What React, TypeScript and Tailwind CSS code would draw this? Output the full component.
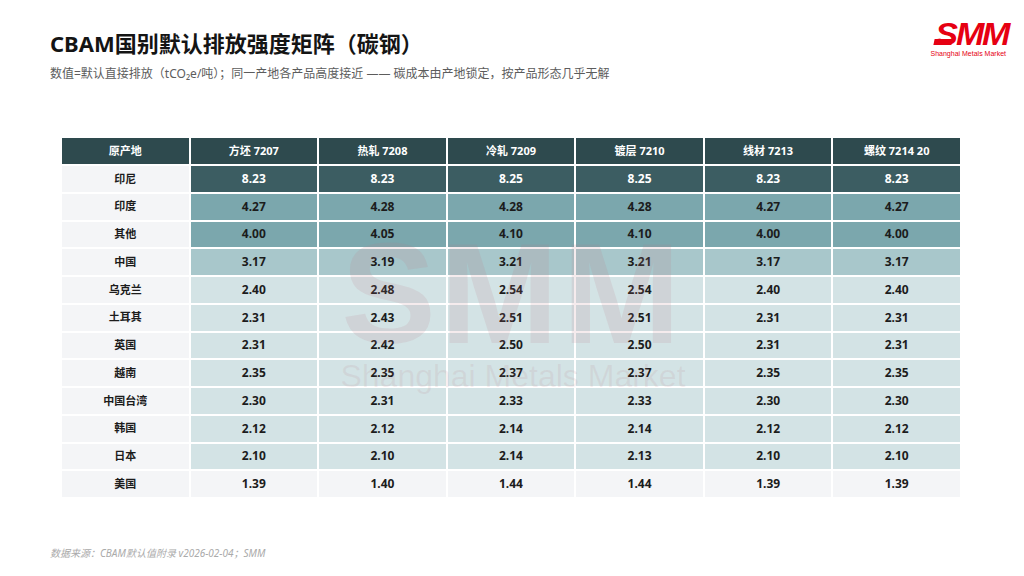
import React from 'react';

const cols = ['方坯 7207', '热轧 7208', '冷轧 7209', '镀层 7210', '线材 7213', '螺纹 7214 20'];

const rows: Array<[string, string[]]> = [
    ['印尼', ['8.23', '8.23', '8.25', '8.25', '8.23', '8.23']],
    ['印度', ['4.27', '4.28', '4.28', '4.28', '4.27', '4.27']],
    ['其他', ['4.00', '4.05', '4.10', '4.10', '4.00', '4.00']],
    ['中国', ['3.17', '3.19', '3.21', '3.21', '3.17', '3.17']],
    ['乌克兰', ['2.40', '2.48', '2.54', '2.54', '2.40', '2.40']],
    ['土耳其', ['2.31', '2.43', '2.51', '2.51', '2.31', '2.31']],
    ['英国', ['2.31', '2.42', '2.50', '2.50', '2.31', '2.31']],
    ['越南', ['2.35', '2.35', '2.37', '2.37', '2.35', '2.35']],
    ['中国台湾', ['2.30', '2.31', '2.33', '2.33', '2.30', '2.30']],
    ['韩国', ['2.12', '2.12', '2.14', '2.14', '2.12', '2.12']],
    ['日本', ['2.10', '2.10', '2.14', '2.13', '2.10', '2.10']],
    ['美国', ['1.39', '1.40', '1.44', '1.44', '1.39', '1.39']],
];

// colour band by value
const cellTone = (v: string) => {
    const n = parseFloat(v);
    if (n >= 8) return 'bg-[#3c5d62] text-white';
    if (n >= 4) return 'bg-[#7ba7ad] text-[#1c1c1c]';
    if (n >= 3) return 'bg-[#a8c7cb] text-[#1c1c1c]';
    if (n >= 2) return 'bg-[#d3e3e5] text-[#1c1c1c]';
    return 'bg-[#f4f5f7] text-[#1c1c1c]';
};

const arial = { fontFamily: '"Liberation Sans", Arial, sans-serif' };

const SmmLogo = () => (
    <div className="flex flex-col items-end -mt-[6px]">
        <div className="relative flex items-end">
            <div className="absolute left-[-8px] bottom-[3px] w-[18px] h-[6px] bg-[#e60012] -skew-x-12" />
            <span className="text-[31px] leading-[26px] font-black italic text-[#e60012] tracking-[-2px] scale-x-110 origin-right" style={arial}>
                SMM
            </span>
        </div>
        <span className="text-[7px] leading-[8px] text-[#e60012] mt-[2px] mr-[2px]" style={arial}>
            Shanghai Metals Market
        </span>
    </div>
);

export default function App() {
    return (
        <div className="w-[1024px] h-[576px] bg-white relative overflow-hidden" style={{ fontFamily: '"Noto Sans", "Noto Sans CJK SC", sans-serif' }}>
            {/* Header */}
            <div className="flex justify-between items-start pl-[50px] pr-[16px] pt-[28px]">
                <div>
                    <h1 className="text-[22px] leading-[30px] font-bold text-[#141414]">CBAM国别默认排放强度矩阵（碳钢）</h1>
                    <p className="text-[12px] leading-[18px] text-[#5c5c5c] mt-[7px]">
                        数值=默认直接排放（tCO₂e/吨）；同一产地各产品高度接近 —— 碳成本由产地锁定，按产品形态几乎无解
                    </p>
                </div>
                <SmmLogo />
            </div>

            {/* Table */}
            <div className="relative ml-[62px] mt-[55px] w-[898px]">
                <div className="grid grid-cols-7 gap-[2px]">
                    <div className="h-[26px] bg-[#2e4a4e] text-white text-[11px] font-bold flex items-center justify-center">原产地</div>
                    {cols.map((c) => (
                        <div key={c} className="h-[26px] bg-[#2e4a4e] text-white text-[11px] font-bold flex items-center justify-center">{c}</div>
                    ))}
                    {rows.map(([name, vals]) => (
                        <React.Fragment key={name}>
                            <div className="h-[25.75px] bg-[#f4f5f7] text-[#1c1c1c] text-[11px] font-bold flex items-center justify-center">{name}</div>
                            {vals.map((v, i) => (
                                <div key={i} className={`h-[25.75px] text-[12px] font-bold flex items-center justify-center ${cellTone(v)}`}>{v}</div>
                            ))}
                        </React.Fragment>
                    ))}
                </div>

                {/* Watermark */}
                <div className="absolute left-[276px] top-[106px] w-[350px] flex flex-col items-center pointer-events-none select-none">
                    <span className="text-[142px] leading-[100px] font-black text-[#b97a84]/15 tracking-[4px]" style={arial}>
                        SMM
                    </span>
                    <span className="text-[32px] leading-[36px] text-[#b97a84]/12 mt-[14px] whitespace-nowrap" style={arial}>
                        Shanghai Metals Market
                    </span>
                </div>
            </div>

            {/* Footer */}
            <p className="absolute left-[50px] top-[546px] text-[10px] italic text-[#aaa]">数据来源：CBAM默认值附录 v2026-02-04；SMM</p>
        </div>
    );
}
